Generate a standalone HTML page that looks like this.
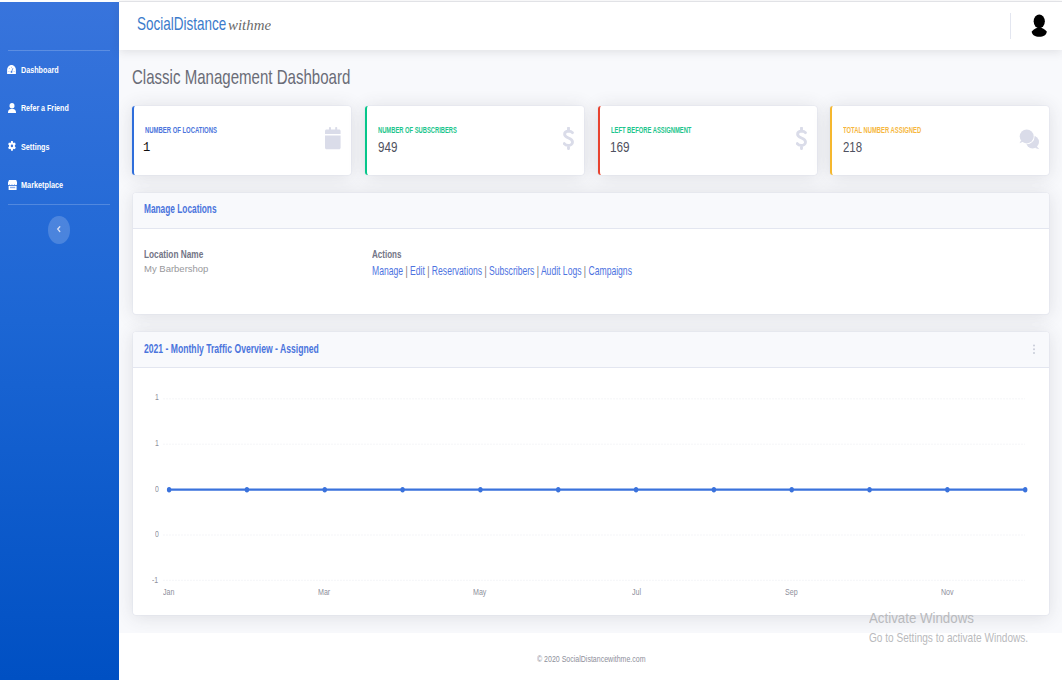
<!DOCTYPE html>
<html><head><meta charset="utf-8">
<style>
*{box-sizing:border-box;margin:0;padding:0}
html,body{width:1062px;height:680px;overflow:hidden}
body{background:#f8f9fc;position:relative;font-family:"Liberation Sans",sans-serif}
.a{position:absolute}
.t{position:absolute;white-space:nowrap;transform-origin:0 0}
.pp{color:#7a6f72}
.card{position:absolute;background:#fff;border-radius:3px;box-shadow:0 0 0 .6px rgba(222,225,236,.7),0 1.5px 18px 0 rgba(58,59,69,.14)}
.hdr{position:absolute;left:0;top:0;right:0;background:#f8f9fc;border-bottom:1px solid #e3e6f0;border-radius:3px 3px 0 0}
</style></head><body>
<!-- top line -->
<div class="a" style="left:0;top:0;width:1062px;height:2px;background:#fdfdfd"></div>
<!-- sidebar -->
<div class="a" style="left:0;top:1.8px;width:119px;height:678.2px;background:linear-gradient(180deg,#3874dc 0%,#1c66d4 47%,#0050c3 100%)"></div>
<div class="a" style="left:7.5px;top:50px;width:102.5px;height:1px;background:rgba(255,255,255,.2)"></div>
<div class="a" style="left:7.5px;top:204px;width:102.5px;height:1px;background:rgba(255,255,255,.2)"></div>
<div class="a" style="left:48.2px;top:216px;width:21.5px;height:27.5px;border-radius:50%;background:rgba(255,255,255,.18)"></div>
<svg class="a" style="left:48px;top:216px" width="22" height="28" viewBox="0 0 22 28"><path d="M11.8 10.7L9.7 13.1l2.1 2.4" stroke="#d5def5" stroke-width="1.3" fill="none" stroke-linecap="round"/></svg>
<!-- nav icons -->
<svg class="a" style="left:7.4px;top:65px" width="9" height="9" viewBox="0 0 9 9"><path d="M.1 8.9V5C.1 2.3 2.1.1 4.5.1S8.9 2.3 8.9 5v3.9z" fill="#fff"/><circle cx="4.5" cy="6.9" r=".9" fill="#3572da"/><path d="M4.5 6.9L5.9 3.2" stroke="#3572da" stroke-width=".7"/><circle cx="1.9" cy="6.5" r=".5" fill="#9fb6ee"/><circle cx="7.1" cy="6.5" r=".5" fill="#9fb6ee"/><circle cx="2.4" cy="3.4" r=".5" fill="#9fb6ee"/><circle cx="4.5" cy="2.2" r=".5" fill="#9fb6ee"/></svg>
<svg class="a" style="left:8.1px;top:102.5px" width="8" height="10.5" viewBox="0 0 8 10.5"><ellipse cx="4" cy="2.7" rx="2.5" ry="2.7" fill="#fff"/><path d="M0 9.3C0 7.2 1.3 5.9 2.8 5.9h2.4C6.7 5.9 8 7.2 8 9.3v.3c0 .5-.4.9-.9.9H.9C.4 10.5 0 10.1 0 9.6z" fill="#fff"/></svg>
<svg class="a" style="left:8px;top:141.1px" width="7.9" height="9.8" viewBox="0 0 16 16" preserveAspectRatio="none"><path d="M6.3 0h3.4l.5 2.4 1.5.9 2.3-.8 1.7 2.9-1.8 1.6v1.9l1.8 1.6-1.7 2.9-2.3-.8-1.5.9-.5 2.4H6.3l-.5-2.4-1.5-.9-2.3.8L.3 10.5l1.8-1.6V7L.3 5.4 2 2.5l2.3.8 1.5-.9z" fill="#fff"/><circle cx="8" cy="8" r="2.4" fill="#3570da"/></svg>
<svg class="a" style="left:7.5px;top:180px" width="9.2" height="10" viewBox="0 0 9.2 10"><path d="M1 0h7.2l1 2.6v1.2c0 .8-.6 1.3-1.3 1.3-.6 0-1.1-.4-1.3-.9-.2.5-.7.9-1.3.9s-1.1-.4-1.3-.9c-.2.5-.7.9-1.3.9S1.5 4.7 1.3 4.2C1.1 4.7.6 5.1 0 5.1V2.6z" fill="#fff"/><path d="M.6 5.8h8v4.2H.6z" fill="#fff"/><path d="M2 6.8h5.2v1.4H2z" fill="#2f6cd8" opacity=".55"/></svg>
<!-- header -->
<div class="a" style="left:119px;top:1.8px;width:943px;height:48.2px;background:#fff;box-shadow:0 2px 9px rgba(58,59,69,.13)"></div><div class="a" style="left:119px;top:0.9px;width:943px;height:1.1px;background:#e1e2e6"></div>
<div class="a" style="left:1010px;top:13px;width:1px;height:26px;background:#e3e6f0"></div>
<svg class="a" style="left:1031px;top:14px" width="17" height="24" viewBox="0 0 17 24"><path d="M.7 17.4Q8.25 9.6 15.8 17.4C15.6 20.8 12.4 22.8 8.25 22.8S.9 20.8.7 17.4z" fill="#000"/><ellipse cx="8.25" cy="7.3" rx="5.6" ry="6.9" fill="#000"/></svg>
<!-- stat cards -->
<div class="card" style="left:131.8px;top:105.6px;width:219.2px;height:69.3px;border-left:2.3px solid #2f6edb"></div>
<div class="card" style="left:365.0px;top:105.6px;width:218.7px;height:69.3px;border-left:2.3px solid #06c68a"></div>
<div class="card" style="left:598.0px;top:105.6px;width:218.5px;height:69.3px;border-left:2.3px solid #e8432f"></div>
<div class="card" style="left:830.4px;top:105.6px;width:218.5px;height:69.3px;border-left:2.3px solid #f5b72e"></div>
<svg class="a" style="left:325.3px;top:127.4px" width="15.6" height="22.3" viewBox="0 0 15.6 22.3"><rect x="4" y="0" width="2" height="3.5" rx=".8" fill="#dadce9"/><rect x="10.2" y="0" width="2" height="3.5" rx=".8" fill="#dadce9"/><path d="M1.5 2.6h12.6c.8 0 1.5.7 1.5 1.5V7H0V4.1c0-.8.7-1.5 1.5-1.5z" fill="#dadce9"/><path d="M0 8.5h15.6v12.3c0 .8-.7 1.5-1.5 1.5H1.5C.7 22.3 0 21.6 0 20.8z" fill="#dadce9"/></svg>
<svg class="a" style="left:562.5px;top:127.2px" width="11" height="22.6" viewBox="0 0 11 22.6"><path d="M5.5 1v3.2M5.5 18.6v3M9.4 5.6C8.6 4.6 7.2 4.1 5.6 4.1 3.2 4.1 1.6 5.4 1.6 7.3c0 4.4 7.9 3 7.9 7.6 0 2.1-1.8 3.5-4.2 3.5-1.7 0-3.3-.7-4.1-1.8" stroke="#dadce9" stroke-width="2.9" fill="none" stroke-linecap="round"/></svg>
<svg class="a" style="left:795.5px;top:127.2px" width="11" height="22.6" viewBox="0 0 11 22.6"><path d="M5.5 1v3.2M5.5 18.6v3M9.4 5.6C8.6 4.6 7.2 4.1 5.6 4.1 3.2 4.1 1.6 5.4 1.6 7.3c0 4.4 7.9 3 7.9 7.6 0 2.1-1.8 3.5-4.2 3.5-1.7 0-3.3-.7-4.1-1.8" stroke="#dadce9" stroke-width="2.9" fill="none" stroke-linecap="round"/></svg>
<svg class="a" style="left:1018.5px;top:128.5px" width="21" height="21" viewBox="0 0 21 21"><circle cx="13.5" cy="13" r="6.5" fill="#dadce9"/><path d="M17.5 17l2.8 3.2-4.2-1.2z" fill="#dadce9"/><circle cx="7.7" cy="7.4" r="7.9" fill="#fff"/><circle cx="7.7" cy="7.4" r="7" fill="#dadce9"/><path d="M2.2 11.2L.4 14.2l4.2-1.6z" fill="#dadce9"/></svg>
<!-- manage card -->
<div class="card" style="left:132.5px;top:193.3px;width:916.5px;height:121px;overflow:hidden"><div class="hdr" style="height:35.5px"></div></div>
<!-- chart card -->
<div class="card" style="left:132.5px;top:331.8px;width:916.5px;height:283.2px;overflow:hidden"><div class="hdr" style="height:35.8px"></div></div>
<svg class="a" style="left:1032px;top:344px" width="4" height="10.5" viewBox="0 0 4 10.5"><circle cx="2" cy="1.5" r="1" fill="#c9ccd8"/><circle cx="2" cy="5.2" r="1" fill="#c9ccd8"/><circle cx="2" cy="8.9" r="1" fill="#c9ccd8"/></svg>
<svg class="a" style="left:0;top:0" width="1062" height="680">
<g stroke="#ecedf2" stroke-width="0.8" stroke-dasharray="1.4 1.6"><line x1="163.3" y1="398.8" x2="1025" y2="398.8" /><line x1="163.3" y1="444.2" x2="1025" y2="444.2" /><line x1="163.3" y1="535.0" x2="1025" y2="535.0" /><line x1="163.3" y1="580.3" x2="1025" y2="580.3" /></g><line x1="169.1" y1="489.7" x2="1025.2" y2="489.7" stroke="#3a72dc" stroke-width="2.2"/><g fill="#3a72dc"><ellipse cx="169.10" cy="489.7" rx="2.2" ry="2.7"/><ellipse cx="246.93" cy="489.7" rx="2.2" ry="2.7"/><ellipse cx="324.75" cy="489.7" rx="2.2" ry="2.7"/><ellipse cx="402.58" cy="489.7" rx="2.2" ry="2.7"/><ellipse cx="480.41" cy="489.7" rx="2.2" ry="2.7"/><ellipse cx="558.24" cy="489.7" rx="2.2" ry="2.7"/><ellipse cx="636.06" cy="489.7" rx="2.2" ry="2.7"/><ellipse cx="713.89" cy="489.7" rx="2.2" ry="2.7"/><ellipse cx="791.72" cy="489.7" rx="2.2" ry="2.7"/><ellipse cx="869.55" cy="489.7" rx="2.2" ry="2.7"/><ellipse cx="947.37" cy="489.7" rx="2.2" ry="2.7"/><ellipse cx="1025.20" cy="489.7" rx="2.2" ry="2.7"/></g>
</svg>
<!-- footer -->
<div class="a" style="left:119px;top:632.5px;width:943px;height:47.5px;background:#fff"></div>
<div class="t" style="left:136.59px;top:13.75px;font-family:'Liberation Sans',sans-serif;font-size:19px;line-height:19px;font-weight:normal;font-style:normal;color:#3b7bcb;transform:scaleX(0.7097)">SocialDistance</div>
<div class="t" style="left:227.50px;top:17.97px;font-family:'Liberation Serif',serif;font-size:14.2px;line-height:14.2px;font-weight:normal;font-style:italic;color:#6a6a6a;transform:scaleX(1.0488)">withme</div>
<div class="t" style="left:132.08px;top:65.95px;font-family:'Liberation Sans',sans-serif;font-size:21px;line-height:21px;font-weight:normal;font-style:normal;color:#6a6c77;transform:scaleX(0.7165)">Classic Management Dashboard</div>
<div class="t" style="left:20.80px;top:64.75px;font-family:'Liberation Sans',sans-serif;font-size:9.7px;line-height:9.7px;font-weight:bold;font-style:normal;color:#ffffff;transform:scaleX(0.7440)">Dashboard</div>
<div class="t" style="left:20.80px;top:102.62px;font-family:'Liberation Sans',sans-serif;font-size:9.5px;line-height:9.5px;font-weight:bold;font-style:normal;color:#ffffff;transform:scaleX(0.7469)">Refer a Friend</div>
<div class="t" style="left:20.80px;top:141.56px;font-family:'Liberation Sans',sans-serif;font-size:9.7px;line-height:9.7px;font-weight:bold;font-style:normal;color:#ffffff;transform:scaleX(0.7474)">Settings</div>
<div class="t" style="left:20.80px;top:180.21px;font-family:'Liberation Sans',sans-serif;font-size:9.4px;line-height:9.4px;font-weight:bold;font-style:normal;color:#ffffff;transform:scaleX(0.7778)">Marketplace</div>
<div class="t" style="left:144.90px;top:126.26px;font-family:'Liberation Sans',sans-serif;font-size:8.4px;line-height:8.4px;font-weight:bold;font-style:normal;color:#4a74dc;transform:scaleX(0.7069)">NUMBER OF LOCATIONS</div>
<div class="t" style="left:377.70px;top:126.26px;font-family:'Liberation Sans',sans-serif;font-size:8.4px;line-height:8.4px;font-weight:bold;font-style:normal;color:#1cc58c;transform:scaleX(0.6921)">NUMBER OF SUBSCRIBERS</div>
<div class="t" style="left:610.50px;top:126.26px;font-family:'Liberation Sans',sans-serif;font-size:8.4px;line-height:8.4px;font-weight:bold;font-style:normal;color:#1cc58c;transform:scaleX(0.6931)">LEFT BEFORE ASSIGNMENT</div>
<div class="t" style="left:843.30px;top:126.26px;font-family:'Liberation Sans',sans-serif;font-size:8.4px;line-height:8.4px;font-weight:bold;font-style:normal;color:#f6b73e;transform:scaleX(0.6991)">TOTAL NUMBER ASSIGNED</div>
<div class="t" style="left:142.70px;top:140.72px;font-family:'Liberation Mono',monospace;font-size:13.5px;line-height:13.5px;font-weight:normal;font-style:normal;color:#111111;transform:scaleX(0.9000)">1</div>
<div class="t" style="left:377.70px;top:139.60px;font-family:'Liberation Sans',sans-serif;font-size:14px;line-height:14px;font-weight:normal;font-style:normal;color:#4f5160;transform:scaleX(0.8304)">949</div>
<div class="t" style="left:609.66px;top:139.60px;font-family:'Liberation Sans',sans-serif;font-size:14px;line-height:14px;font-weight:normal;font-style:normal;color:#4f5160;transform:scaleX(0.8409)">169</div>
<div class="t" style="left:843.30px;top:139.60px;font-family:'Liberation Sans',sans-serif;font-size:14px;line-height:14px;font-weight:normal;font-style:normal;color:#4f5160;transform:scaleX(0.8174)">218</div>
<div class="t" style="left:143.80px;top:203.53px;font-family:'Liberation Sans',sans-serif;font-size:11.9px;line-height:11.9px;font-weight:bold;font-style:normal;color:#4a74dc;transform:scaleX(0.6990)">Manage Locations</div>
<div class="t" style="left:144.40px;top:248.59px;font-family:'Liberation Sans',sans-serif;font-size:11.3px;line-height:11.3px;font-weight:bold;font-style:normal;color:#737586;transform:scaleX(0.7321)">Location Name</div>
<div class="t" style="left:144.10px;top:264.74px;font-family:'Liberation Sans',sans-serif;font-size:8.6px;line-height:8.6px;font-weight:normal;font-style:normal;color:#98989c;transform:scaleX(1.1052)">My Barbershop</div>
<div class="t" style="left:372.30px;top:248.61px;font-family:'Liberation Sans',sans-serif;font-size:11.4px;line-height:11.4px;font-weight:bold;font-style:normal;color:#737586;transform:scaleX(0.7048)">Actions</div>
<div class="t" style="left:371.58px;top:265.74px;font-family:'Liberation Sans',sans-serif;font-size:11.9px;line-height:11.9px;font-weight:normal;font-style:normal;color:#4e73df;transform:scaleX(0.7223)">Manage <span class="pp">|</span> Edit <span class="pp">|</span> Reservations <span class="pp">|</span> Subscribers <span class="pp">|</span> Audit Logs <span class="pp">|</span> Campaigns</div>
<div class="t" style="left:143.90px;top:342.63px;font-family:'Liberation Sans',sans-serif;font-size:12.2px;line-height:12.2px;font-weight:bold;font-style:normal;color:#4a74dc;transform:scaleX(0.7065)">2021 - Monthly Traffic Overview - Assigned</div>
<div class="t" style="left:536.80px;top:654.71px;font-family:'Liberation Sans',sans-serif;font-size:8.7px;line-height:8.7px;font-weight:normal;font-style:normal;color:#8e8f9b;transform:scaleX(0.8075)">© 2020 SocialDistancewithme.com</div>
<div class="t" style="left:869.30px;top:610.12px;font-family:'Liberation Sans',sans-serif;font-size:15.5px;line-height:15.5px;font-weight:normal;font-style:normal;color:#b9babd;transform:scaleX(0.8574)">Activate Windows</div>
<div class="t" style="left:869.30px;top:630.95px;font-family:'Liberation Sans',sans-serif;font-size:13.0px;line-height:13.0px;font-weight:normal;font-style:normal;color:#b9babd;transform:scaleX(0.7755)">Go to Settings to activate Windows.</div>
<div class="t" style="left:154.50px;top:392.92px;font-family:'Liberation Sans',sans-serif;font-size:8.8px;line-height:8.8px;font-weight:normal;font-style:normal;color:#8e8f9b;transform:scaleX(0.7800)">1</div>
<div class="t" style="left:154.50px;top:438.72px;font-family:'Liberation Sans',sans-serif;font-size:8.8px;line-height:8.8px;font-weight:normal;font-style:normal;color:#8e8f9b;transform:scaleX(0.7800)">1</div>
<div class="t" style="left:154.50px;top:484.52px;font-family:'Liberation Sans',sans-serif;font-size:8.8px;line-height:8.8px;font-weight:normal;font-style:normal;color:#8e8f9b;transform:scaleX(0.7800)">0</div>
<div class="t" style="left:154.50px;top:530.02px;font-family:'Liberation Sans',sans-serif;font-size:8.8px;line-height:8.8px;font-weight:normal;font-style:normal;color:#8e8f9b;transform:scaleX(0.7800)">0</div>
<div class="t" style="left:152.16px;top:575.82px;font-family:'Liberation Sans',sans-serif;font-size:8.8px;line-height:8.8px;font-weight:normal;font-style:normal;color:#8e8f9b;transform:scaleX(0.7800)">-1</div>
<div class="t" style="left:163.44px;top:587.56px;font-family:'Liberation Sans',sans-serif;font-size:9.1px;line-height:9.1px;font-weight:normal;font-style:normal;color:#8e8f9b;transform:scaleX(0.7800)">Jan</div>
<div class="t" style="left:318.31px;top:587.56px;font-family:'Liberation Sans',sans-serif;font-size:9.1px;line-height:9.1px;font-weight:normal;font-style:normal;color:#8e8f9b;transform:scaleX(0.7800)">Mar</div>
<div class="t" style="left:473.19px;top:587.56px;font-family:'Liberation Sans',sans-serif;font-size:9.1px;line-height:9.1px;font-weight:normal;font-style:normal;color:#8e8f9b;transform:scaleX(0.7800)">May</div>
<div class="t" style="left:631.57px;top:587.56px;font-family:'Liberation Sans',sans-serif;font-size:9.1px;line-height:9.1px;font-weight:normal;font-style:normal;color:#8e8f9b;transform:scaleX(0.7800)">Jul</div>
<div class="t" style="left:785.28px;top:587.56px;font-family:'Liberation Sans',sans-serif;font-size:9.1px;line-height:9.1px;font-weight:normal;font-style:normal;color:#8e8f9b;transform:scaleX(0.7800)">Sep</div>
<div class="t" style="left:940.93px;top:587.56px;font-family:'Liberation Sans',sans-serif;font-size:9.1px;line-height:9.1px;font-weight:normal;font-style:normal;color:#8e8f9b;transform:scaleX(0.7800)">Nov</div>
</body></html>
